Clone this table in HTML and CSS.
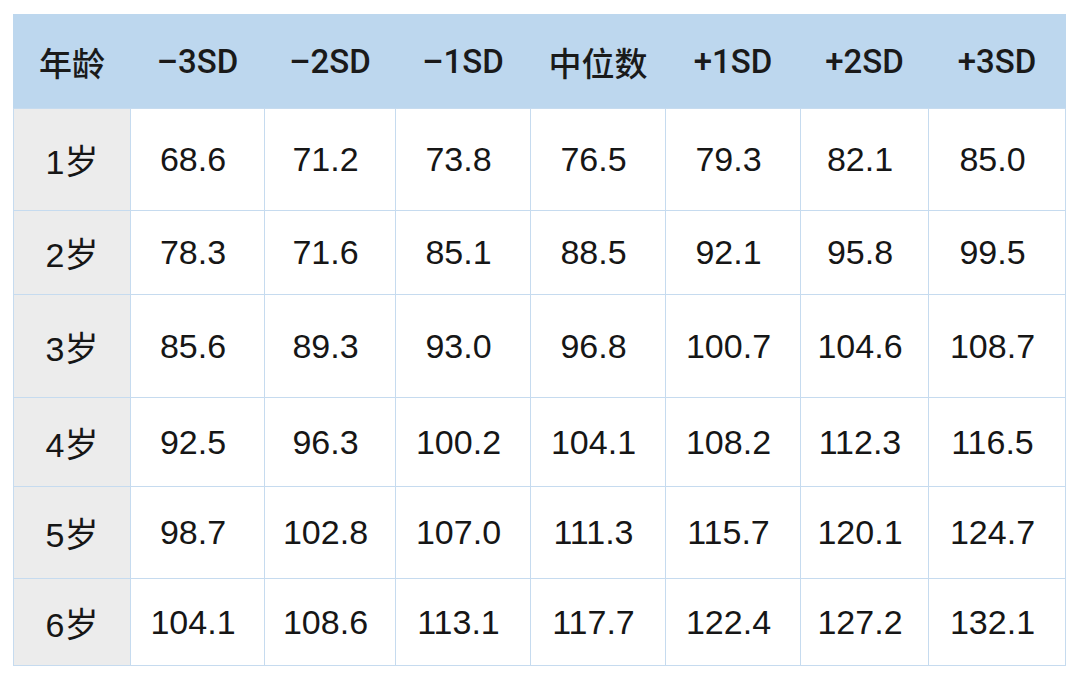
FILE: index.html
```html
<!DOCTYPE html>
<html lang="zh">
<head>
<meta charset="utf-8">
<link rel="stylesheet" href="styles.css">
</head>
<body>
<div class="wrap">
<table class="sd">
  <colgroup>
    <col class="c0"><col class="c1"><col class="c2"><col class="c3"><col class="c4"><col class="c5"><col class="c6"><col class="c7">
  </colgroup>
  <thead>
    <tr class="head">
      <th>年龄</th><th>–3SD</th><th>–2SD</th><th>–1SD</th><th>中位数</th><th>+1SD</th><th>+2SD</th><th>+3SD</th>
    </tr>
  </thead>
  <tbody>
    <tr class="r1"><td class="age">1岁</td><td>68.6</td><td>71.2</td><td>73.8</td><td>76.5</td><td>79.3</td><td>82.1</td><td>85.0</td></tr>
    <tr class="r2"><td class="age">2岁</td><td>78.3</td><td>71.6</td><td>85.1</td><td>88.5</td><td>92.1</td><td>95.8</td><td>99.5</td></tr>
    <tr class="r3"><td class="age">3岁</td><td>85.6</td><td>89.3</td><td>93.0</td><td>96.8</td><td>100.7</td><td>104.6</td><td>108.7</td></tr>
    <tr class="r4"><td class="age">4岁</td><td>92.5</td><td>96.3</td><td>100.2</td><td>104.1</td><td>108.2</td><td>112.3</td><td>116.5</td></tr>
    <tr class="r5"><td class="age">5岁</td><td>98.7</td><td>102.8</td><td>107.0</td><td>111.3</td><td>115.7</td><td>120.1</td><td>124.7</td></tr>
    <tr class="r6"><td class="age">6岁</td><td>104.1</td><td>108.6</td><td>113.1</td><td>117.7</td><td>122.4</td><td>127.2</td><td>132.1</td></tr>
  </tbody>
</table>
</div>
</body>
</html>
```

FILE: styles.css
```css
html, body {
  margin: 0;
  padding: 0;
  background: #ffffff;
}
.wrap {
  padding: 14px 0 0 13px;
}
.sd {
  border-collapse: collapse;
  table-layout: fixed;
  width: 1053px;
  font-family: "Liberation Sans", "Noto Sans CJK SC", sans-serif;
  color: #161616;
  font-size: 34px;
}
.c0 { width: 117px; }
.c1 { width: 134px; }
.c2 { width: 131px; }
.c3 { width: 135px; }
.c4 { width: 135px; }
.c5 { width: 135px; }
.c6 { width: 128px; }
.c7 { width: 137px; }

.sd th, .sd td {
  text-align: center;
  vertical-align: middle;
  padding: 0;
  white-space: nowrap;
}
.sd td {
  border: 1.5px solid #c6dbef;
  padding-right: 9px;
}
.sd td.age {
  background: #ececec;
  padding-right: 0;
}
.head th {
  background: #bdd7ee;
  font-family: "Roboto", "Noto Sans CJK SC", sans-serif;
  font-weight: 500;
  font-size: 33px;
  color: #1a1a1a;
  border: 1.5px solid #bdd7ee;
  border-bottom-color: #c6dbef;
}
.head { height: 94px; }
.r1 { height: 102px; }
.r2 { height: 84px; }
.r3 { height: 103px; }
.r4 { height: 89px; }
.r5 { height: 92px; }
.r6 { height: 87px; }
```
